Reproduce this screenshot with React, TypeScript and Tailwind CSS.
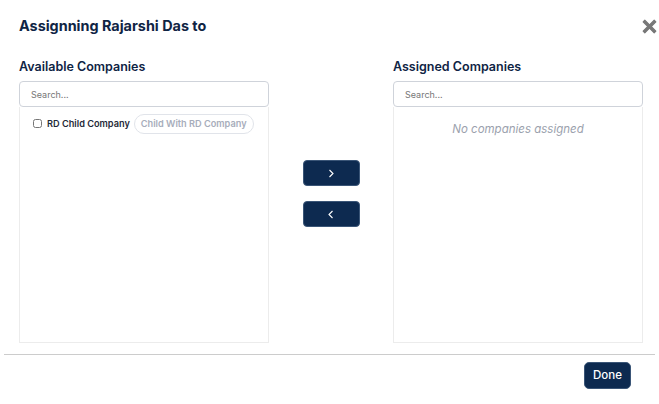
import React from 'react';

const font = { fontFamily: 'Inter, "Noto Sans", sans-serif' };

function CompanyColumn({ title, children }: { title: string; children: React.ReactNode }) {
  return (
    <div className="flex w-[250px] flex-col">
      <h3 className="h-[22px] pt-[1px] text-[12.5px] font-semibold leading-[14px] text-[#0f2444]">{title}</h3>
      <input
        type="text"
        placeholder="Search..."
        className="h-[26px] w-full rounded-[4px] border border-[#cfd3da] px-[11px] text-[9px] text-[#333] placeholder:text-[#777] focus:outline-none"
      />
      <div className="h-[236px] border border-t-0 border-[#ececec]">{children}</div>
    </div>
  );
}

export default function App() {
  return (
    <div className="h-[404px] w-[659px] bg-white" style={font}>
      <div className="flex items-start justify-between pl-[19px] pr-[2px] pt-[16px]">
        <h2 className="text-[14.4px] font-bold leading-[20px] text-[#0f2444]">Assignning Rajarshi Das to</h2>
        <button className="mt-[3px] text-[#777]">
          <svg width="15" height="15" viewBox="0 0 16 16">
            <path d="M3 1.2 L8 6.2 L13 1.2 L14.8 3 L9.8 8 L14.8 13 L13 14.8 L8 9.8 L3 14.8 L1.2 13 L6.2 8 L1.2 3 Z" fill="currentColor" stroke="currentColor" strokeWidth="1.2" strokeLinejoin="round" />
          </svg>
        </button>
      </div>

      <div className="flex pl-[19px] pt-[23px]">
        <CompanyColumn title="Available Companies">
          <div className="flex items-center pl-[13px] pt-[7px]">
            <input type="checkbox" className="h-[9px] w-[9px]" />
            <span className="ml-[5px] text-[9.2px] font-semibold text-[#1f2937]">RD Child Company</span>
            <span className="ml-[4px] rounded-full border border-[#e1e4ea] px-[6px] py-[2px] text-[9.2px] font-semibold text-[#a7adbb]">
              Child With RD Company
            </span>
          </div>
        </CompanyColumn>

        <div className="flex w-[124px] flex-col items-center gap-[15px] pt-[101px]">
          <button className="flex h-[26px] w-[57px] items-center justify-center rounded-[4px] border border-[#3a5577] bg-[#0d2a50] text-white">
            <svg width="8" height="9" viewBox="0 0 8 9" fill="none">
              <path d="M2.5 1 L6 4.5 L2.5 8" stroke="white" strokeWidth="1.1" />
            </svg>
          </button>
          <button className="flex h-[26px] w-[57px] items-center justify-center rounded-[4px] border border-[#3a5577] bg-[#0d2a50] text-white">
            <svg width="8" height="9" viewBox="0 0 8 9" fill="none">
              <path d="M5.5 1 L2 4.5 L5.5 8" stroke="white" strokeWidth="1.1" />
            </svg>
          </button>
        </div>

        <CompanyColumn title="Assigned Companies">
          <p className="pt-[14px] text-center text-[11.5px] italic text-[#9ba1ad]">No companies assigned</p>
        </CompanyColumn>
      </div>

      <div className="mx-[4px] mt-[11px] border-t border-[#cccccc]" />

      <div className="flex justify-end pr-[28px] pt-[7px]">
        <button className="h-[27px] w-[47px] rounded-[5px] border border-[#3a5577] bg-[#0d2a50] text-[11.5px] font-medium text-white">
          Done
        </button>
      </div>
    </div>
  );
}
